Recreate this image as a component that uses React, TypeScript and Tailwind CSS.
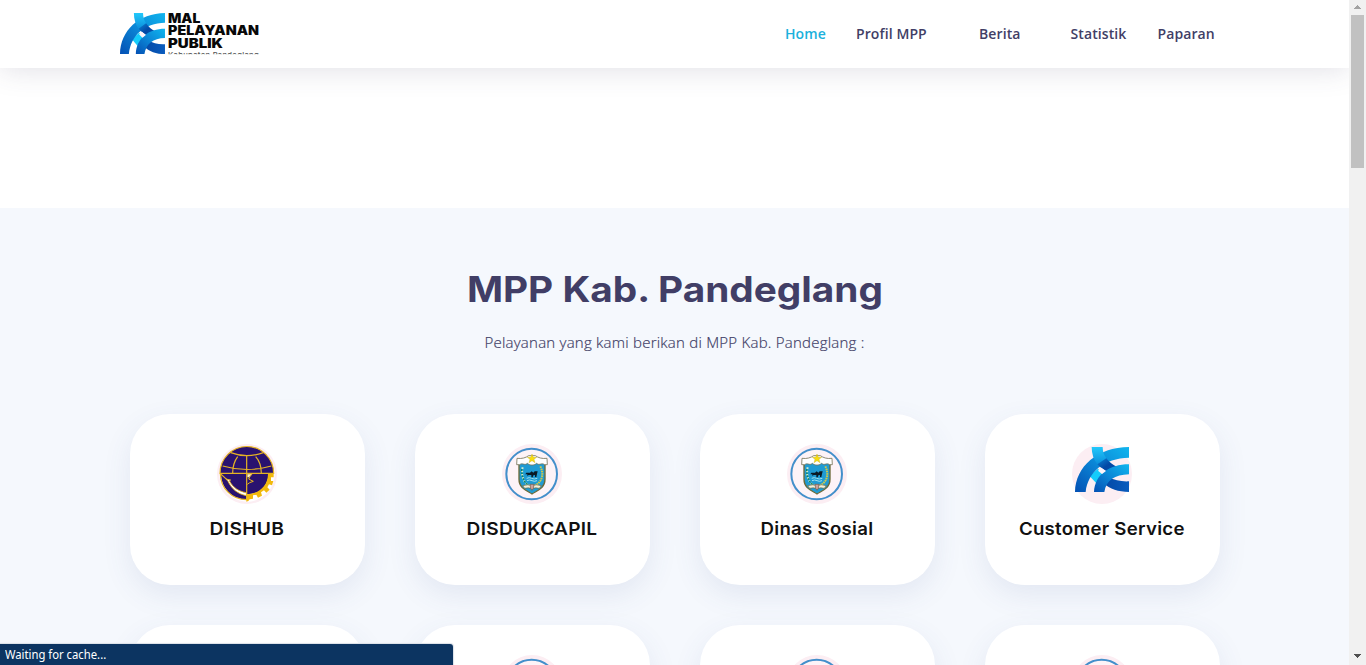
import React from 'react';

function MarkShapes({ id }: { id: string }) {
  return (
    <g>
      <defs>
        <linearGradient id={id + 'a'} x1="0" y1="1" x2="1" y2="0">
          <stop offset="0" stopColor="#0450b4" />
          <stop offset=".5" stopColor="#0b86d6" />
          <stop offset="1" stopColor="#10b5ee" />
        </linearGradient>
        <linearGradient id={id + 'b'} x1="0" y1="0" x2="0" y2="1">
          <stop offset="0" stopColor="#22c9fb" />
          <stop offset="1" stopColor="#0b8edb" />
        </linearGradient>
        <linearGradient id={id + 'c'} x1="0" y1="0" x2="1" y2="0">
          <stop offset="0" stopColor="#0348a5" />
          <stop offset="1" stopColor="#0a5cbe" />
        </linearGradient>
        <linearGradient id={id + 'd'} x1="0" y1="0" x2="1" y2="1">
          <stop offset="0" stopColor="#0b86d6" />
          <stop offset=".5" stopColor="#0348a5" />
          <stop offset="1" stopColor="#0350ae" />
        </linearGradient>
      </defs>
      <path d="M88 122L114 101L140 134L114 150Z" fill="#14ccfb" />
      <path d="M148 126C162 136 183 140 207 139V171C175 171 150 162 130 145Z" fill={`url(#${id}c)`} />
      <path d="M45 171C47 94 112 37 207 36V68C132 70 84 110 77 171Z" fill={`url(#${id}a)`} />
      <path d="M95 36H128C128 50 132 60 139 70L112 88C101 74 95 56 95 36Z" fill={`url(#${id}b)`} />
      <path d="M112 88L139 70C148 82 158 90 172 96L148 113C134 107 122 99 112 88Z" fill={`url(#${id}d)`} />
      <path d="M102 171C105 119 147 88 207 88V118C164 119 139 136 133 171Z" fill={`url(#${id}a)`} />
      <path d="M114 107L124 98L138 108L126 117Z" fill="#fdf4fa" />
    </g>
  );
}

function HeaderLogo() {
  return (
    <svg className="block h-[42px] w-[141px] overflow-visible" viewBox="30 39 423 126">
      <g transform="translate(-7.5 6.2) scale(.833 .912)">
        <MarkShapes id="h" />
      </g>
      <g fill="#080808" fontFamily="Inter, sans-serif" fontWeight="900" fontSize="38">
        <text x="174" y="67.5" textLength="97" lengthAdjust="spacingAndGlyphs">MAL</text>
        <text x="174" y="106" textLength="273" lengthAdjust="spacingAndGlyphs">PELAYANAN</text>
        <text x="174" y="145" textLength="165" lengthAdjust="spacingAndGlyphs">PUBLIK</text>
      </g>
      <svg x="170" y="153" width="283" height="10" viewBox="170 153 283 10">
        <text x="174" y="173" textLength="272" fill="#555" fontFamily="Inter, sans-serif" fontWeight="500" fontSize="23">
          Kabupaten Pandeglang
        </text>
      </svg>
    </svg>
  );
}

function ServiceMark() {
  return (
    <svg className="block size-[60px]" viewBox="36 27 180 180">
      <circle cx="126" cy="117" r="90" fill="#fceef3" />
      <MarkShapes id="s" />
    </svg>
  );
}

function Transport() {
  return (
    <svg className="block size-[60px]" viewBox="21 12 180 180">
      <circle cx="111" cy="102" r="90" fill="#fceef3" />
      <circle cx="111" cy="102" r="83" fill="#fff" />
      <path d="M30 100A80 80 0 0 1 191 100Z" fill="#29126f" />
      <path d="M33 101H176C174 140 148 162 110 163V178C68 178 33 145 33 101Z" fill="#29126f" />
      <path
        d="M174 101H191V112H183V123H190L186 136L177 133L172 142L179 149L169 158L162 151L153 157L156 167L144 173L139 164L129 166V176L119 178L115 183L109 185V163C145 163 174 138 174 101Z"
        fill="#f2b90c"
      />
      <path d="M48 117L62 120L58 122C69 143 86 154 109 158V167C83 162 65 147 54 124Z" fill="#fff" stroke="#e8b41c" strokeWidth="2.5" />
      <path d="M112 102H126L119 111L116 117L130 124L119 128L112 133" fill="none" stroke="#e8b41c" strokeWidth="3" />
      <path d="M112 103H124L117 112H112Z" fill="#fff3c4" />
      <g fill="none" stroke="#e5b324" strokeWidth="3.6">
        <path d="M30 100A80 80 0 0 1 191 100Z" />
        <path d="M31 101C32 145 65 179 110 179V46M31 101L50 118M68 100C68 76 74 62 83 50M154 100C154 76 148 62 137 50M38 78Q110 99 184 78M62 38Q110 56 160 38" />
      </g>
    </svg>
  );
}

function Crest() {
  return (
    <svg className="block size-[60px]" viewBox="21 12 180 180">
      <circle cx="111" cy="102" r="90" fill="#fceef3" />
      <circle cx="110" cy="102" r="76" fill="#fdf3f7" stroke="#438fcb" strokeWidth="6" />
      <path d="M72 62Q91 65 111 55Q130 65 150 62V118C150 145 128 151 111 162C94 151 72 145 72 118Z" fill="#1f9bd3" stroke="#6c6a3a" strokeWidth="4" />
      <path d="M66 55C82 57 92 53 101 47H121C130 53 140 57 156 55L157 74H149C139 67 133 78 125 70C117 77 105 77 97 70C89 78 83 67 74 74H65Z" fill="#fff" stroke="#777459" strokeWidth="2.5" />
      <path d="M111 42L115 52H125L117 58L120 68L111 62L102 68L105 58L97 52H107Z" fill="#f8dc14" stroke="#b9a51c" strokeWidth="1" />
      <path d="M83 82C78 105 84 127 103 137" fill="none" stroke="#d7edca" strokeWidth="6" strokeDasharray="5 5" />
      <path d="M80 88C80 113 88 130 106 139" fill="none" stroke="#168354" strokeWidth="4" strokeDasharray="5 4" />
      <path d="M136 79C149 105 139 129 117 138" fill="none" stroke="#cfc94b" strokeWidth="6" strokeDasharray="5 2" />
      <path d="M91 103L94 98H105L110 94L115 98L119 94H128L126 102L124 111H120V105L115 106L113 112H109V105H101L97 108V103Z" fill="#0a1a26" />
      <path d="M95 115Q103 111 110 115T127 115M96 122Q104 118 111 122T126 122" fill="none" stroke="#9de0ef" strokeWidth="3" />
      <path d="M83 137Q99 132 111 137Q123 132 139 137L133 145Q120 141 111 147Q102 141 89 145Z" fill="#f2efd9" stroke="#6c6844" strokeWidth="2" />
      <path d="M105 133H117L115 145L111 151L107 145Z" fill="#c9a3a0" stroke="#715947" strokeWidth="2" />
    </svg>
  );
}

const nav = [
  { label: 'Home', box: 'w-[71px]', text: 'text-[#1bb1dc]' },
  { label: 'Profil MPP', box: 'w-[123px]', text: 'text-[#413e66]' },
  { label: 'Berita', box: 'w-[91.5px]', text: 'text-[#413e66]' },
  { label: 'Statistik', box: 'w-[87px]', text: 'text-[#413e66]' },
  { label: 'Paparan', box: 'w-[58.5px]', text: 'text-[#413e66]' },
];

const services = [
  { title: 'DISHUB', icon: <Transport />, fit: 'scale-x-[1.1]' },
  { title: 'DISDUKCAPIL', icon: <Crest />, fit: 'scale-x-[1.09]' },
  { title: 'Dinas Sosial', icon: <Crest />, fit: 'scale-x-[1.065]' },
  { title: 'Customer Service', icon: <ServiceMark />, fit: 'scale-x-[1.065]' },
  { title: '', icon: <Crest />, fit: '' },
  { title: '', icon: <Crest />, fit: '' },
  { title: '', icon: <Crest />, fit: '' },
  { title: '', icon: <Crest />, fit: '' },
];

export default function App() {
  return (
    <div className="relative flex h-[665px] w-[1366px] overflow-hidden bg-white font-['Open_Sans',sans-serif]">
      <div className="flex h-full w-[1349px] flex-col overflow-hidden">
        <header className="z-10 flex h-[68px] shrink-0 justify-between bg-white pl-[120px] pr-[133px] shadow-[0_0_30px_rgba(65,62,102,0.18)]">
          <div className="pt-[13px]">
            <HeaderLogo />
          </div>
          <nav className="flex pt-[23px] text-[14px] leading-[21px] font-semibold tracking-[0.1px] whitespace-nowrap">
            {nav.map((n) => (
              <a key={n.label} className={`${n.box} ${n.text}`}>
                {n.label}
              </a>
            ))}
          </nav>
        </header>
        <div className="h-[140px] shrink-0 bg-white" />
        <section className="h-[640px] shrink-0 bg-[#f5f8fd] pt-[59px]">
          <h2 className="flex h-[44px] items-center justify-center font-['Inter',sans-serif] text-[35px] font-bold text-[#413e66]">
            <span className="inline-block scale-x-[1.107] whitespace-nowrap">MPP Kab. Pandeglang</span>
          </h2>
          <p className="mt-[20px] text-center text-[15px] leading-[23px] font-light tracking-[0.235px] text-[#413e66] [-webkit-text-stroke:0.2px_#413e66]">
            Pelayanan yang kami berikan di MPP Kab. Pandeglang :
          </p>
          <div className="mt-[60px] ml-[130px] grid w-[1090px] grid-cols-4 gap-x-[50px] gap-y-[40px]">
            {services.map((s, i) => (
              <div
                key={i}
                className="flex h-[171px] flex-col items-center rounded-[40px] bg-white pt-[30px] shadow-[0_10px_29px_0_rgba(68,88,144,0.1)]"
              >
                <div className="pr-px">{s.icon}</div>
                <h4 className="mt-[14px] pr-px font-['Inter',sans-serif] text-[17.5px] leading-[22px] font-semibold tracking-[0.25px] text-[#111]">
                  <span className={`inline-block whitespace-nowrap ${s.fit}`}>{s.title}</span>
                </h4>
              </div>
            ))}
          </div>
        </section>
      </div>
      <div className="flex h-full w-[17px] flex-col items-center bg-[#f1f1f1]">
        <svg className="h-[15px] w-[17px] shrink-0" viewBox="0 0 17 15" shapeRendering="crispEdges">
          <path d="M5 9h7v-1h-1v-1h-1v-1h-1v-1h-1v1h-1v1h-1v1h-1z" fill="#a3a3a3" />
        </svg>
        <div className="h-[153px] w-[13px] bg-[#c1c1c1]" />
        <svg className="mt-auto h-[17px] w-[17px] shrink-0" viewBox="0 0 17 17" shapeRendering="crispEdges">
          <path d="M5 6h7v1h-1v1h-1v1h-1v1h-1v-1h-1v-1h-1v-1h-1z" fill="#505050" />
        </svg>
      </div>
      <div className="absolute bottom-0 left-0 z-20 h-[21px] w-[453px] rounded-tr-[3px] bg-[#0c3461] pl-[5px] font-['Noto_Sans',sans-serif] text-[12px] leading-[21px] text-white shadow-[0_0_1px_1px_#dbe0e8]">
        <span className="inline-block origin-left scale-x-[0.94] whitespace-nowrap">Waiting for cache...</span>
      </div>
    </div>
  );
}
